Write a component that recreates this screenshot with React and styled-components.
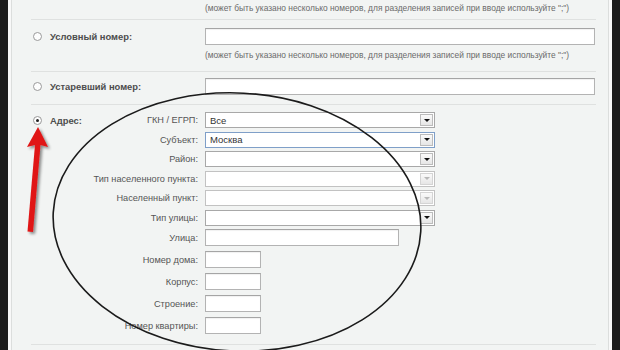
import React from "react";
import styled, { createGlobalStyle } from "styled-components";

const Global = createGlobalStyle`
  html, body {
    margin: 0;
    padding: 0;
    background: #1c1c1c;
  }
  body {
    font-family: "Liberation Sans", Arial, sans-serif;
  }
`;

const Page = styled.div`
  position: relative;
  width: 620px;
  height: 350px;
  overflow: hidden;
  background: #1c1c1c;
  display: flex;
`;

const Panel = styled.div`
  margin: 0 8px 0 8px;
  flex: 1;
  background: #f8f8f8;
  padding: 0 3px;
  display: flex;
`;

const Inner = styled.div`
  flex: 1;
  background: #f2f4f3;
  border-left: 1px solid #dcdedd;
  border-right: 1px solid #dcdedd;
  display: flex;
  flex-direction: column;
`;

const SectionWrap = styled.div`
  padding-left: 19px;
  padding-right: 12px;
`;

const Section = styled.div`
  display: flex;
  align-items: ${(p) => (p.$top ? "flex-start" : "center")};
  padding: ${(p) => p.$pad || "6px 0 9px 0"};
  padding-left: 2px;
  border-bottom: 1px solid #dfe1e0;
`;

const TopRow = styled.div`
  height: 20px;
  box-sizing: border-box;
  padding-top: 3px;
  padding-left: 2px;
  border-bottom: 1px solid #dfe1e0;
`;

const RadioCol = styled.div`
  width: 17px;
  flex-shrink: 0;
  display: flex;
  align-items: center;
  height: ${(p) => (p.$h ? p.$h : "auto")};
`;

const Radio = styled.span`
  display: inline-block;
  width: 7px;
  height: 7px;
  border-radius: 50%;
  border: 1px solid #9a9a9a;
  background: #fdfdfd;
  position: relative;
  &::after {
    content: "";
    display: ${(p) => (p.$checked ? "block" : "none")};
    position: absolute;
    left: 2px;
    top: 2px;
    width: 3px;
    height: 3px;
    border-radius: 50%;
    background: #222;
  }
`;

const MainLabel = styled.div`
  width: 155px;
  flex-shrink: 0;
  font-size: 9.4px;
  font-weight: bold;
  color: #4d4d4d;
  line-height: ${(p) => p.$lh || "normal"};
`;

const FieldCol = styled.div`
  flex: 1;
  display: flex;
  flex-direction: column;
  gap: ${(p) => p.$gap || "5px"};
`;

const TextInput = styled.div`
  box-sizing: border-box;
  width: ${(p) => p.$w || "390px"};
  height: 17px;
  background: #fff;
  border: 1px solid #b3b3b3;
  border-top-color: #a5a5a5;
  box-shadow: inset 0 1px 1px rgba(0, 0, 0, 0.06);
`;

const Hint = styled.div`
  font-size: 8.4px;
  line-height: 11px;
  color: #6a6a6a;
  white-space: nowrap;
`;

const TopHint = styled(Hint)`
  margin-left: 172px;
`;

const AddressGrid = styled.div`
  display: grid;
  grid-template-columns: 42px 113px 1fr;
  row-gap: ${(p) => p.$gap || "3.5px"};
  align-items: center;
  margin-top: ${(p) => p.$mt || "0"};
`;

const AddrLabel = styled.div`
  grid-column: 1;
  font-size: 9.4px;
  font-weight: bold;
  color: #4d4d4d;
`;

const SubLabel = styled.div`
  grid-column: 2;
  text-align: right;
  font-size: 9.2px;
  color: #555;
  white-space: nowrap;
  padding-right: 7px;
`;

const FieldCell = styled.div`
  grid-column: 3;
`;

const SelectBox = styled.div`
  box-sizing: border-box;
  width: 230px;
  height: 16px;
  background: #fff;
  border: 1px solid
    ${(p) => (p.$focused ? "#7f9fc8" : p.$disabled ? "#c2c2c2" : "#a8a8a8")};
  display: flex;
  align-items: center;
  padding: 0 1px 0 4px;
`;

const SelectValue = styled.span`
  flex: 1;
  font-size: 9.5px;
  color: #333;
  white-space: nowrap;
`;

const ArrowBtn = styled.span`
  box-sizing: border-box;
  width: 13px;
  height: 12px;
  border: 1px solid ${(p) => (p.$disabled ? "#d4d4d4" : "#bcbcbc")};
  background: linear-gradient(#fafafa, #e6e6e6);
  display: flex;
  align-items: center;
  justify-content: center;
  &::after {
    content: "";
    width: 0;
    height: 0;
    border-left: 3px solid transparent;
    border-right: 3px solid transparent;
    border-top: 3px solid ${(p) => (p.$disabled ? "#b8b8b8" : "#111")};
  }
`;

const Overlay = styled.svg`
  position: absolute;
  left: 0;
  top: 0;
  pointer-events: none;
`;

const Select = ({ value, focused, disabled }) => (
  <SelectBox $focused={focused} $disabled={disabled}>
    <SelectValue>{value}</SelectValue>
    <ArrowBtn $disabled={disabled} />
  </SelectBox>
);

const hintText =
  "(может быть указано несколько номеров, для разделения записей при вводе используйте \";\")";

const selects = [
  { label: "ГКН / ЕГРП:", value: "Все" },
  { label: "Субъект:", value: "Москва", focused: true },
  { label: "Район:", value: "" },
  { label: "Тип населенного пункта:", value: "", disabled: true },
  { label: "Населенный пункт:", value: "", disabled: true },
  { label: "Тип улицы:", value: "" },
];

const inputs = [
  { label: "Улица:", w: "194px" },
  { label: "Номер дома:", w: "56px" },
  { label: "Корпус:", w: "56px" },
  { label: "Строение:", w: "56px" },
  { label: "Номер квартиры:", w: "56px" },
];

const App = () => {
  return (
    <Page>
      <Global />
      <Panel>
        <Inner>
          <SectionWrap>
            <TopRow>
              <TopHint>{hintText}</TopHint>
            </TopRow>
            <Section $top $pad="8px 0 10px 0">
              <RadioCol $h="17px">
                <Radio />
              </RadioCol>
              <MainLabel $lh="17px">Условный номер:</MainLabel>
              <FieldCol>
                <TextInput />
                <Hint>{hintText}</Hint>
              </FieldCol>
            </Section>
            <Section $pad="6px 0 9px 0">
              <RadioCol>
                <Radio />
              </RadioCol>
              <MainLabel>Устаревший номер:</MainLabel>
              <FieldCol>
                <TextInput />
              </FieldCol>
            </Section>
            <Section $top $pad="7px 0 10px 0">
              <RadioCol $h="16px">
                <Radio $checked />
              </RadioCol>
              <FieldCol $gap="0">
                <AddressGrid>
                  {selects.map((s, i) => (
                    <React.Fragment key={s.label}>
                      {i === 0 && <AddrLabel>Адрес:</AddrLabel>}
                      <SubLabel>{s.label}</SubLabel>
                      <FieldCell>
                        <Select
                          value={s.value}
                          focused={s.focused}
                          disabled={s.disabled}
                        />
                      </FieldCell>
                    </React.Fragment>
                  ))}
                </AddressGrid>
                <AddressGrid $gap="5px" $mt="3.5px">
                  {inputs.map((f) => (
                    <React.Fragment key={f.label}>
                      <SubLabel>{f.label}</SubLabel>
                      <FieldCell>
                        <TextInput $w={f.w} />
                      </FieldCell>
                    </React.Fragment>
                  ))}
                </AddressGrid>
              </FieldCol>
            </Section>
          </SectionWrap>
        </Inner>
      </Panel>
      <Overlay width="620" height="350" viewBox="0 0 620 350">
        <defs>
          <filter id="sh" x="-50%" y="-50%" width="200%" height="200%">
            <feGaussianBlur in="SourceAlpha" stdDeviation="1.6" />
            <feOffset dx="1.5" dy="2" result="b" />
            <feComponentTransfer>
              <feFuncA type="linear" slope="0.45" />
            </feComponentTransfer>
            <feMerge>
              <feMergeNode />
              <feMergeNode in="SourceGraphic" />
            </feMerge>
          </filter>
        </defs>
        <ellipse
          cx="237"
          cy="222"
          rx="184"
          ry="129"
          transform="rotate(3 237 222)"
          fill="none"
          stroke="#1b1b1b"
          strokeWidth="1.6"
        />
        <g filter="url(#sh)">
          <polygon
            points="38,127 48,147 40.5,145 33,232 27.5,231.5 35,145 27,147"
            fill="#e01616"
          />
        </g>
      </Overlay>
    </Page>
  );
};

export default App;
